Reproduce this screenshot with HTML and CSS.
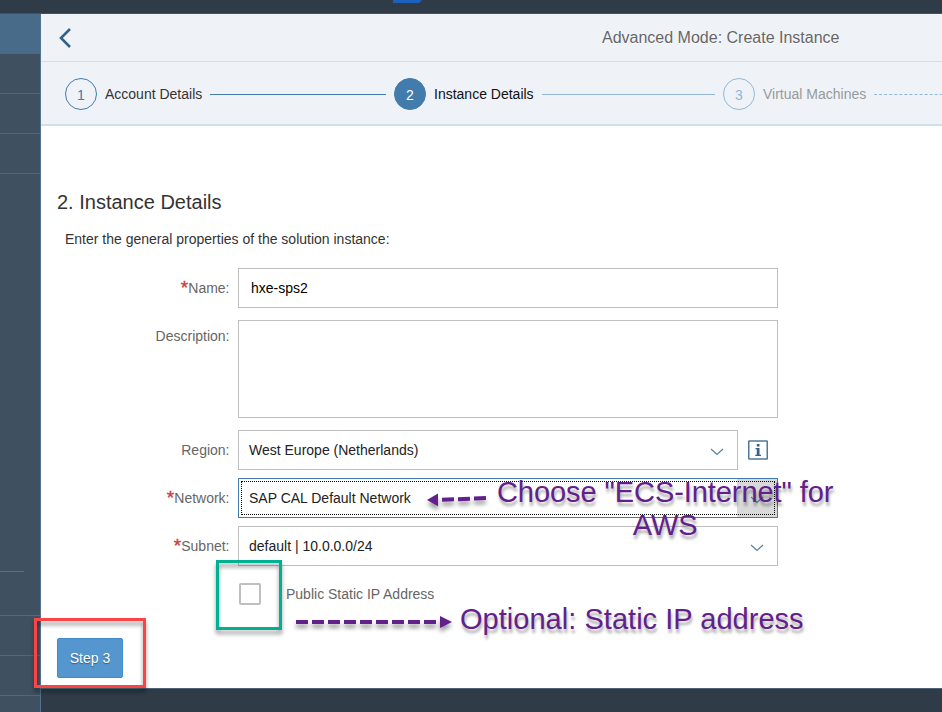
FILE: index.html
```html
<!DOCTYPE html>
<html lang="en">
<head>
<meta charset="utf-8">
<title>Create Instance</title>
<link rel="stylesheet" href="styles.css">
</head>
<body>
<div class="shell">
  <div class="topbar"><span class="logo"></span></div>
  <div class="body">
    <nav class="side">
      <div class="item active"></div>
      <div class="item"></div>
      <div class="item"></div>
      <div class="item"></div>
      <div class="space"><div class="mark"></div></div>
      <div class="item"></div>
      <div class="item"></div>
      <div class="rest"></div>
    </nav>
    <div class="page">
      <header class="head">
        <svg class="back" width="14" height="20" viewBox="0 0 14 20"><path d="M12 1 3 10l9 9" fill="none" stroke="#346187" stroke-width="2.6"/></svg>
        <h1>Advanced Mode: Create Instance</h1>
      </header>
      <div class="wizard">
        <div class="step one"><span class="num">1</span><span class="name">Account Details</span><i></i></div>
        <div class="step two"><span class="num">2</span><span class="name">Instance Details</span><i></i></div>
        <div class="step three"><span class="num">3</span><span class="name">Virtual Machines</span><i></i></div>
      </div>
      <main class="content">
        <h2>2. Instance Details</h2>
        <p>Enter the general properties of the solution instance:</p>
        <div class="form">
          <div class="row"><label><b>*</b>Name:</label><div class="field text">hxe-sps2</div></div>
          <div class="row tall"><label>Description:</label><div class="field"></div></div>
          <div class="row close"><label>Region:</label><div class="field short">West Europe (Netherlands)<svg class="chev" width="14" height="8" viewBox="0 0 14 8"><path d="M1 1l6 5.5L13 1" fill="none" stroke="#58809f" stroke-width="1.2"/></svg></div>
            <svg class="info" width="20" height="20" viewBox="0 0 20 20"><rect x=".75" y="1" width="18.5" height="18" rx=".5" fill="#fff" stroke="#4f789a" stroke-width="1.5"/><path d="M8.8 4h2.7v2.5H8.8zM7.5 8h4v6.7h1.5V16H7.3v-1.3h1.5V9.3H7.5z" fill="#346187"/></svg>
          </div>
          <div class="row close"><label><b>*</b>Network:</label><div class="field focus">SAP CAL Default Network<span class="drop"><svg width="14" height="8" viewBox="0 0 14 8"><path d="M1 1l6 5.5L13 1" fill="none" stroke="#58809f" stroke-width="1.2"/></svg></span></div></div>
          <div class="row close"><label><b>*</b>Subnet:</label><div class="field">default | 10.0.0.0/24<svg class="chev" width="14" height="8" viewBox="0 0 14 8"><path d="M1 1l6 5.5L13 1" fill="none" stroke="#58809f" stroke-width="1.2"/></svg></div></div>
          <div class="check"><span class="box"></span><span>Public Static IP Address</span></div>
        </div>
        <button class="next">Step 3</button>
      </main>
      <footer></footer>
    </div>
  </div>
  <div class="frame green"></div>
  <div class="frame red"></div>
  <svg class="arrow left" width="62" height="16" viewBox="0 0 62 16"><path d="M1 8 12 1.5v12.8z" fill="#62208c"/><path d="M16 7.8 60 6" fill="none" stroke="#62208c" stroke-width="4" stroke-dasharray="12 4"/></svg>
  <svg class="arrow right" width="158" height="16" viewBox="0 0 158 16"><path d="M0 8h144" fill="none" stroke="#62208c" stroke-width="4" stroke-dasharray="12 4"/><path d="M144 2v12l12-6z" fill="#62208c"/></svg>
  <div class="note aws">Choose "ECS-Internet" for<br>AWS</div>
  <div class="note ip">Optional: Static IP address</div>
</div>
</body>
</html>
```
FILE: styles.css
```css
* { box-sizing: border-box; }
body { margin: 0; font: 14px/20px "Liberation Sans", Arial, sans-serif; color: #333; }
.shell { position: relative; width: 942px; height: 712px; overflow: hidden; display: flex; flex-direction: column; background: #fff; }
.topbar { height: 14px; background: #2f3b47; border-bottom: 1px solid #405364; padding-left: 393px; }
.logo { display: block; width: 29px; height: 3px; background: #1c62bd; clip-path: polygon(0 0, 100% 0, 90% 100%, 0 100%); }
.body { flex: 1; display: flex; min-height: 0; }
.side { width: 41px; background: #3f5161; border-right: 1px solid #547490; display: flex; flex-direction: column; }
.item { height: 40px; border-bottom: 1px solid #536779; }
.active { background: #486b8a; }
.space { flex: 1; border-bottom: 1px solid #536779; display: flex; flex-direction: column; justify-content: flex-end; padding-bottom: 43px; }
.mark { height: 1px; width: 24px; background: #1784c2; }
.rest { height: 16px; }
.page { flex: 1; display: flex; flex-direction: column; min-width: 0; }
.head { height: 48px; display: flex; align-items: center; background: #eff3f8; border-bottom: 1px solid #cfdfec; padding-left: 17px; }
.back { margin-top: 1px; }
h1 { margin: 0 0 0 530px; font-size: 16px; font-weight: 400; color: #666; white-space: nowrap; text-shadow: 0 1px 0 #fff; }
.wizard { height: 64px; display: flex; align-items: center; background: #eff3f8; border-bottom: 2px solid #cfdfec; padding: 2px 0 0 24px; }
.step { width: 329px; flex: none; display: flex; align-items: center; gap: 8px; padding-right: 8px; }
.num { width: 32px; height: 32px; border: 1px solid #427cac; border-radius: 50%; color: #427cac; text-align: center; line-height: 32px; flex: none; }
.name { white-space: nowrap; }
.step i { flex: 1; height: 0; border-top: 1px solid #427cac; margin-top: 1px; }
.two .num { background: #427cac; color: #fff; }
.two .name { color: #111; }
.two i { border-color: #91b8d8; }
.three .num { border-color: #91b8d8; color: #91b8d8; }
.three .name { color: #999; }
.three i { border-top: 1px dashed #91b8d8; }
.content { height: 562px; padding: 64px 0 0 16px; background: #fff; }
h2 { margin: 0; font-size: 20px; line-height: 24px; font-weight: 400; }
p { margin: 15px 0 19px 8px; }
.form { display: flex; flex-direction: column; }
.row { display: flex; margin-bottom: 12px; }
.close { margin-bottom: 8px; }
label { width: 172.5px; margin-right: 8.5px; text-align: right; padding-top: 10px; color: #666; line-height: 20px; height: 40px; white-space: nowrap; }
.tall label { padding-top: 6px; }
label b { color: #c9403f; font-size: 19px; font-weight: 400; -webkit-text-stroke: .4px #c9403f; line-height: 10px; vertical-align: -1px; }
.field { position: relative; width: 540px; height: 40px; border: 1px solid #bfbfbf; padding: 9px 10px; color: #222; display: flex; justify-content: space-between; }
.text { padding-left: 12px; color: #000; }
.tall .field { height: 98px; }
.short { width: 500px; }
.chev { margin: 8px 3px 0 0; }
.info { margin: 10px 0 0 10px; }
.focus { border-color: #427cac; }
.focus::after { content: ""; position: absolute; inset: 2px; border: 1px dotted #000; }
.drop { position: absolute; top: 0; right: 0; width: 40px; height: 38px; background: #d9d9d9; padding: 16px 0 0 13px; line-height: 8px; }
.check { display: flex; align-items: center; height: 40px; gap: 25px; padding-left: 182px; color: #666; }
.box { width: 22px; height: 22px; border: 2px solid #bfbfbf; border-radius: 2px; }
.next { display: block; width: 66px; height: 40px; margin-top: 24px; padding: 0; border: 1px solid #428bca; border-radius: 2px; background: #5496cd; color: #fff; font: inherit; text-shadow: 0 1px 1px #0006; }
footer { flex: 1; background: #2f3b47; border-top: 1px solid #4c6376; }
.frame { position: absolute; border: 3px solid; }
.green { left: 216px; top: 560px; width: 66px; height: 70px; border-color: #00b092; filter: drop-shadow(0 4px 2px #0006); }
.red { left: 34px; top: 618px; width: 112px; height: 70px; border-color: #fc4346; filter: drop-shadow(0 4px 2px #0006); }
.arrow { position: absolute; filter: drop-shadow(0 4px 2px #0006); }
.left { left: 426px; top: 492px; }
.right { left: 296px; top: 614px; }
.note { position: absolute; color: #62208c; font-size: 29px; line-height: 33px; text-align: center; white-space: nowrap; text-shadow: 1px 4px 3px #0005; }
.aws { left: 497px; top: 476px; letter-spacing: -.07px; }
.ip { left: 460px; top: 603px; letter-spacing: .03px; }
```
